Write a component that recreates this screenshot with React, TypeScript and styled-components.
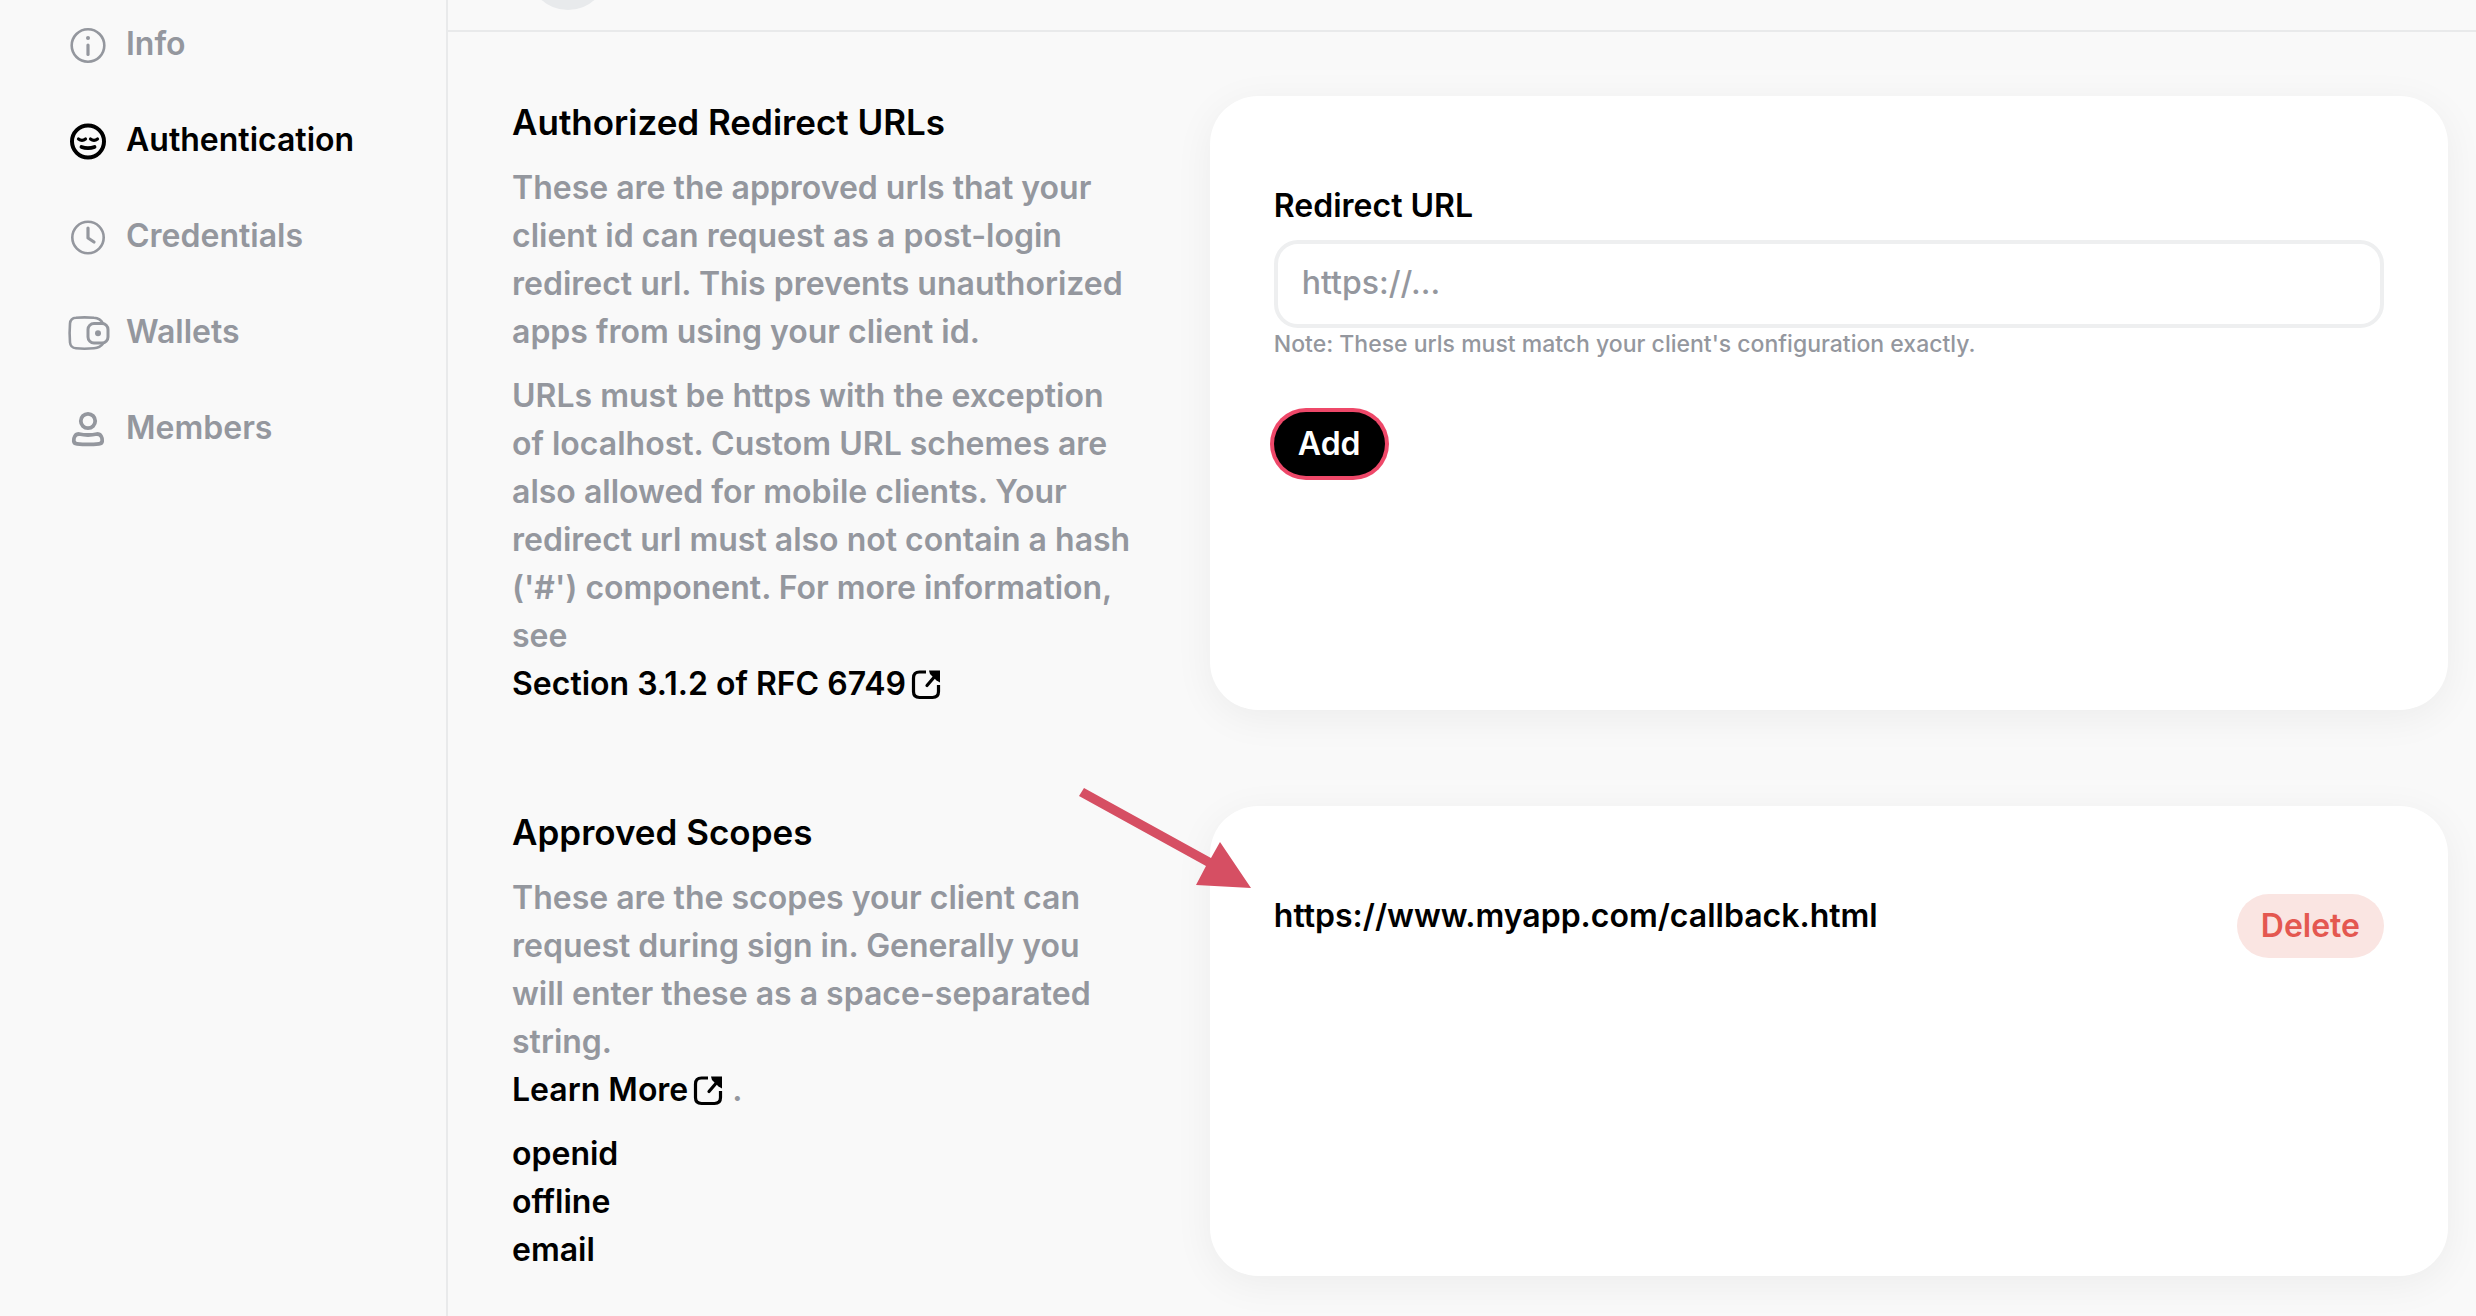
import React from "react";
import styled, { createGlobalStyle } from "styled-components";

const GlobalStyle = createGlobalStyle`
  *, *::before, *::after { box-sizing: border-box; }
  body {
    margin: 0;
    background: #f9f9f9;
    color: #000;
    font-family: Inter, "Open Sans", sans-serif;
    font-size: 32px;
    line-height: 48px;
    font-weight: 600;
  }
  #root { min-height: 100vh; display: flex; }
`;

const Page = styled.div`
  flex: 1;
  display: grid;
  grid-template-columns: 448px minmax(0, 1fr);
  min-height: 100vh;
`;

const Sidebar = styled.nav`
  border-right: 2px solid #e9eaeb;
  display: flex;
  flex-direction: column;
  gap: 48px;
  padding: 20px 64px;
`;

const NavLink = styled.a<{ $active?: boolean }>`
  display: grid;
  grid-template-columns: 48px 1fr;
  column-gap: 14px;
  align-items: center;
  height: 48px;
  text-decoration: none;
  color: ${(p) => (p.$active ? "#000" : "#94979e")};
  svg { justify-self: center; }
`;

const Main = styled.main`
  display: flex;
  flex-direction: column;
  min-width: 0;
`;

const Header = styled.header`
  height: 32px;
  border-bottom: 2px solid #e9eaeb;
  padding: 0 80px;
  display: flex;
  align-items: flex-end;
  overflow: hidden;
`;

const Avatar = styled.div`
  width: 80px;
  height: 80px;
  flex: none;
  margin-bottom: 20px;
  border-radius: 50%;
  background: #e8eaec;
`;

const Content = styled.div`
  padding: 64px 28px 40px 64px;
  display: flex;
  flex-direction: column;
  gap: 96px;
`;

const Section = styled.section`
  display: grid;
  grid-template-columns: minmax(0, 34fr) minmax(0, 66fr);
  column-gap: 60px;
`;

const Description = styled.div`
  display: flex;
  flex-direction: column;
  gap: 16px;
  color: #94979e;
  padding-bottom: 2px;
`;

const Title = styled.h2`
  margin: 0;
  font-size: 35px;
  line-height: 52px;
  font-weight: 600;
  color: #000;
`;

const Text = styled.p`
  margin: 0;
`;

const DocLink = styled.a`
  display: inline-flex;
  align-items: center;
  gap: 4px;
  color: #000;
  text-decoration: none;
`;

const LinkLine = styled.span`
  display: block;
  height: 48px;
`;

const ScopeList = styled.ul`
  list-style: none;
  margin: 0;
  padding: 0;
  color: #000;
`;

const Card = styled.div`
  position: relative;
  background: #fff;
  border-radius: 48px;
  padding: 88px 64px;
  box-shadow: 0 8px 40px rgba(0, 0, 0, 0.055);
`;

const Form = styled.form`
  display: flex;
  flex-direction: column;
  align-items: flex-start;
`;

const Label = styled.label`
  line-height: 44px;
  margin-bottom: 12px;
`;

const UrlInput = styled.input`
  width: 100%;
  height: 88px;
  padding: 0 24px 4px;
  border: 4px solid #eeeff0;
  border-radius: 24px;
  background: #fff;
  color: #000;
  font: inherit;
  font-weight: 500;
  outline: none;
  &::placeholder { color: #94979e; opacity: 1; }
`;

const Note = styled.span`
  font-size: 23px;
  line-height: 32px;
  font-weight: 500;
  color: #94979e;
`;

const PillButton = styled.button<{ $tone: "primary" | "danger" }>`
  height: 64px;
  padding: 0 24px;
  border: 0;
  border-radius: 32px;
  font: inherit;
  cursor: pointer;
  color: ${(p) => (p.$tone === "primary" ? "#fff" : "#e45850")};
  background: ${(p) => (p.$tone === "primary" ? "#000" : "#fae5e2")};
  box-shadow: ${(p) => (p.$tone === "primary" ? "0 0 0 4px #ee4869" : "none")};
`;

const FormActions = styled.div`
  margin-top: 52px;
`;

const UrlRow = styled.div`
  display: flex;
  justify-content: space-between;
  align-items: flex-start;
  gap: 24px;
`;

const UrlText = styled.span`
  line-height: 44px;
`;

const Pointer = styled.svg`
  position: absolute;
  left: -131px;
  top: -20px;
  pointer-events: none;
`;

const InfoIcon = () => (
  <svg width="48" height="48" viewBox="0 0 48 48" fill="none" stroke="currentColor" strokeWidth="2.6">
    <circle cx="24" cy="25.500" r="16.3" />
    <path d="M24 25v9.5" strokeWidth="3.200" strokeLinecap="round" />
    <circle cx="24" cy="18" r="2" fill="currentColor" stroke="none" />
  </svg>
);

const FaceIcon = () => (
  <svg width="48" height="48" viewBox="0 0 48 48" fill="none" stroke="currentColor" strokeWidth="4" strokeLinecap="round">
    <circle cx="24" cy="25.500" r="16" />
    <path d="M14.500 23q3.500 2.600 7 0M26.500 23q3.500 2.600 7 0" strokeWidth="3.200" />
    <path d="M17.500 31q6.500 2.400 13 0" strokeWidth="3.800" />
  </svg>
);

const ClockIcon = () => (
  <svg width="48" height="48" viewBox="0 0 48 48" fill="none" stroke="currentColor" strokeWidth="2.6" strokeLinecap="round">
    <circle cx="24" cy="25.500" r="15.7" />
    <path d="M24 16v10l6 4" strokeWidth="3.200" strokeLinejoin="round" />
  </svg>
);

const WalletIcon = () => (
  <svg width="48" height="48" viewBox="0 0 48 48" fill="none" stroke="currentColor" strokeWidth="2.600">
    <path d="M39 15.500C37 11.500 34 10 30 9.800Q20 9 12 9.800Q6.500 10.100 6 15.500Q5.200 25.500 6 34.500Q6.500 39.900 12 40.300Q20 41.100 30 40.300C34 40 37 38.500 39 35.500" />
    <rect x="24" y="15.500" width="20" height="19.500" rx="6" strokeWidth="3" />
    <circle cx="34" cy="25.200" r="3" fill="currentColor" stroke="none" />
  </svg>
);

const MemberIcon = () => (
  <svg width="48" height="48" viewBox="0 0 48 48" fill="none" stroke="currentColor" strokeWidth="3.800">
    <circle cx="24" cy="17" r="7.200" />
    <path d="M15 30Q24 32 33 30C37 30 38.500 34 38.200 37Q38 39.500 35 39.800Q24 41 13 39.800Q10 39.500 9.800 37C9.500 34 11 30 15 30Z" strokeLinejoin="round" />
  </svg>
);

const ExternalIcon = () => (
  <svg width="32" height="32" viewBox="0 0 32 32" fill="none" stroke="currentColor" strokeWidth="3.200">
    <path d="M16 4H9.500Q3.500 4 3.500 10V23.500Q3.500 29.500 9.500 29.500H22.500Q28.500 29.500 28.500 23.500V17" />
    <path d="M17 17.500L26 7" strokeLinecap="round" />
    <path d="M19 2.500H30V14.500L26.500 12.500L20 6Z" fill="currentColor" stroke="none" />
  </svg>
);

const navItems = [
  { label: "Info", Icon: InfoIcon },
  { label: "Authentication", Icon: FaceIcon, active: true },
  { label: "Credentials", Icon: ClockIcon },
  { label: "Wallets", Icon: WalletIcon },
  { label: "Members", Icon: MemberIcon },
];

const scopes = ["openid", "offline", "email"];

export default function App() {
  return (
    <>
      <GlobalStyle />
      <Page>
        <Sidebar>
          {navItems.map(({ label, Icon, active }) => (
            <NavLink key={label} href="#" $active={active} aria-current={active ? "page" : undefined}>
              <Icon />
              {label}
            </NavLink>
          ))}
        </Sidebar>
        <Main>
          <Header>
            <Avatar />
          </Header>
          <Content>
            <Section>
              <Description>
                <Title>Authorized Redirect URLs</Title>
                <Text>
                  These are the approved urls that your client id can request as a post-login redirect url. This
                  prevents unauthorized apps from using your client id.
                </Text>
                <Text>
                  URLs must be https with the exception of&nbsp;localhost. Custom URL schemes are also allowed for
                  mobile clients. Your redirect url must also not contain a hash ('#') component. For more
                  information, see
                  <LinkLine>
                    <DocLink href="#">
                      Section 3.1.2 of RFC 6749
                      <ExternalIcon />
                    </DocLink>
                  </LinkLine>
                </Text>
              </Description>
              <Card>
                <Form onSubmit={(e) => e.preventDefault()}>
                  <Label htmlFor="redirect-url">Redirect URL</Label>
                  <UrlInput id="redirect-url" type="text" placeholder="https://..." />
                  <Note>Note: These urls must match your client's configuration exactly.</Note>
                  <FormActions>
                    <PillButton type="submit" $tone="primary">Add</PillButton>
                  </FormActions>
                </Form>
              </Card>
            </Section>
            <Section>
              <Description>
                <Title>Approved Scopes</Title>
                <Text>
                  These are the scopes your client can request during sign in. Generally you will&nbsp;enter these
                  as a space-separated string.
                  <LinkLine>
                    <DocLink href="#">
                      Learn More
                      <ExternalIcon />
                    </DocLink>{" "}
                    .
                  </LinkLine>
                </Text>
                <ScopeList>
                  {scopes.map((s) => (
                    <li key={s}>{s}</li>
                  ))}
                </ScopeList>
              </Description>
              <Card>
                <UrlRow>
                  <UrlText>https://www.myapp.com/callback.html</UrlText>
                  <PillButton type="button" $tone="danger">Delete</PillButton>
                </UrlRow>
                <Pointer width="176" height="106" viewBox="0 0 176 106" fill="#d64f63" aria-hidden="true">
                  <path d="M5 2L132 72L141 56L172 102L117 99L127 80L0 10Z" />
                </Pointer>
              </Card>
            </Section>
          </Content>
        </Main>
      </Page>
    </>
  );
}
